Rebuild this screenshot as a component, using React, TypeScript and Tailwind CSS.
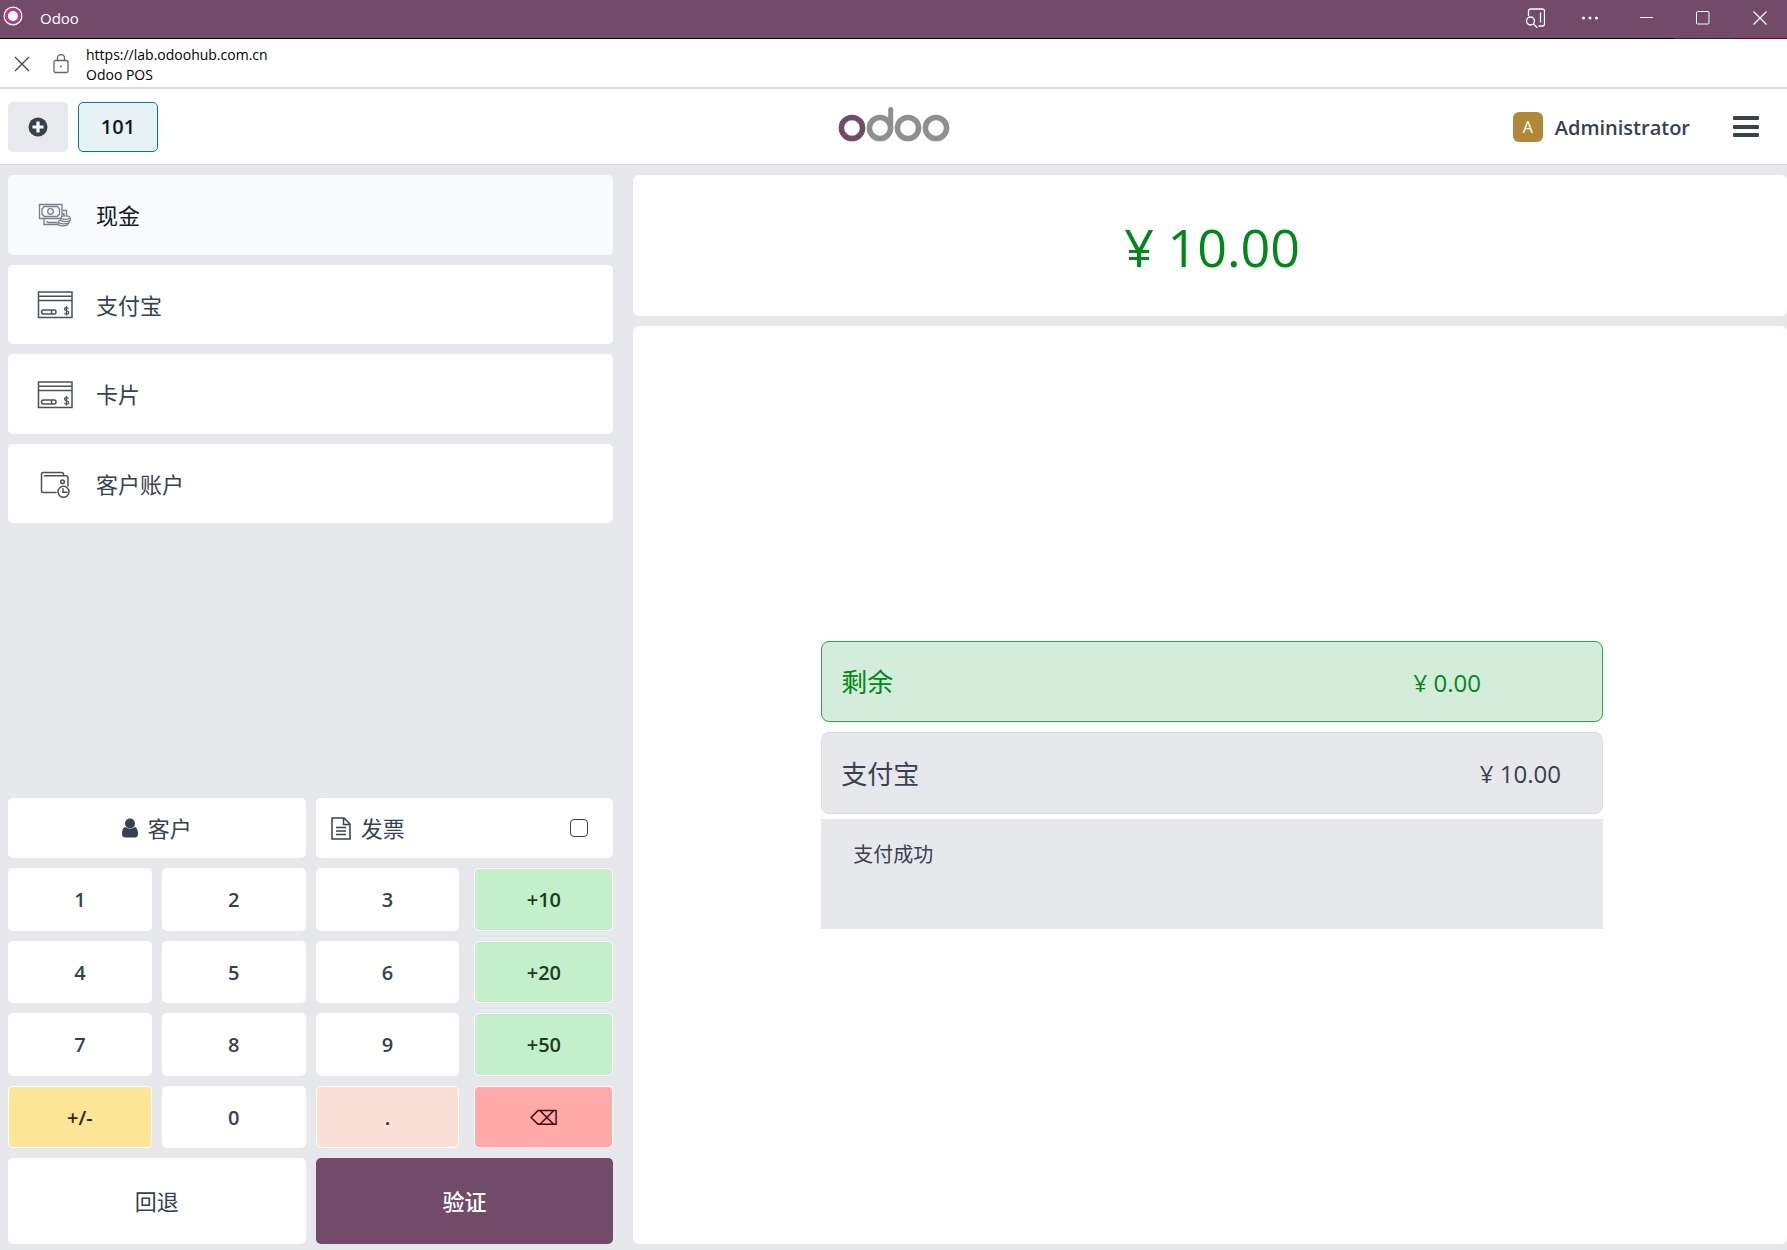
import { ReactNode, useState } from "react";
import clsx from "clsx";

const LINE = "#4b505e";

function CashIcon() {
  return (
    <svg width="36" height="28" viewBox="0 0 36 28" fill="none" stroke="#7b7f89" strokeWidth="1.3">
      <path d="M2.500 2.500h22.500v14h-22.500z" />
      <path d="M7 4.500h13.500a2.500 2.500 0 0 0 2 2v6a2.500 2.500 0 0 0-2 2h-13.500a2.500 2.500 0 0 0-2-2v-6a2.500 2.500 0 0 0 2-2z" />
      <circle cx="13.500" cy="9.500" r="2.800" />
      <path d="M7 17v5.500h14M9.500 19a2.500 2.500 0 0 0 2 1.500h9M25.500 8.500h4v5M25 12h2v2" />
      <g fill="#f9fafc">
        <ellipse cx="26" cy="21.800" rx="5" ry="2" />
        <ellipse cx="27" cy="19.800" rx="5.500" ry="2" />
        <ellipse cx="28.500" cy="17.600" rx="5" ry="2" />
        <ellipse cx="28.500" cy="15.600" rx="4.500" ry="1.800" />
      </g>
    </svg>
  );
}

function CardIcon() {
  return (
    <svg width="36" height="28" viewBox="0 0 36 28" fill="none" stroke={LINE} strokeWidth="1.5">
      <path d="M1.500 1h33.500v25.500H1.500z" />
      <path d="M1.500 5.300h33.500M1.500 9.500h33.500" />
      <rect x="4.500" y="19" width="14.500" height="4" rx="2" />
      <path d="M14.500 19v4" />
      <path d="M31.500 17.700c-.6-1.600-4-1.600-4 .3 0 2.300 4.200 1.300 4.200 3.700 0 2-3.700 2-4.200.2M29.500 15v9.500" strokeWidth="1.300" />
    </svg>
  );
}

function WalletIcon() {
  return (
    <svg width="36" height="28" viewBox="0 0 36 28" fill="none" stroke={LINE} strokeWidth="1.500" strokeLinecap="round">
      <path d="M19 22.500H6a1.500 1.500 0 0 1-1.500-1.500V4a1.500 1.500 0 0 1 1.500-1.500h19a1.500 1.500 0 0 1 1.500 1.500v1.500" />
      <path d="M7.500 5.700h21.500a2 2 0 0 1 2 2V16" />
      <circle cx="25.500" cy="11.700" r="1.800" />
      <circle cx="26.500" cy="21.800" r="5.500" />
      <path d="M26 18.800v3.500h4" />
    </svg>
  );
}

const methods = [
  { id: "cash", name: "现金", icon: <CashIcon /> },
  { id: "alipay", name: "支付宝", icon: <CardIcon /> },
  { id: "card", name: "卡片", icon: <CardIcon /> },
  { id: "account", name: "客户账户", icon: <WalletIcon /> },
];

const PLAIN = "bg-white font-semibold text-[#374151]";
const GREEN = "ml-[5px] border border-white bg-[#c3f0ca] font-semibold text-[#1d3a22]";

const keys = [
  { label: "1", style: PLAIN },
  { label: "2", style: PLAIN },
  { label: "3", style: PLAIN },
  { label: "+10", style: GREEN },
  { label: "4", style: PLAIN },
  { label: "5", style: PLAIN },
  { label: "6", style: PLAIN },
  { label: "+20", style: GREEN },
  { label: "7", style: PLAIN },
  { label: "8", style: PLAIN },
  { label: "9", style: PLAIN },
  { label: "+50", style: GREEN },
  { label: "+/-", style: "border border-white bg-[#fde598] font-semibold text-[#2b2710]" },
  { label: "0", style: PLAIN },
  { label: ".", style: "border border-white bg-[#fae0d6] font-semibold text-[#40261b]" },
  { label: "⌫", style: "ml-[5px] border border-white bg-[#ffa9a9] text-[#450a0a]" },
];

function WindowButton({ label, children }: { label: string; children: ReactNode }) {
  return (
    <button type="button" aria-label={label} className="flex h-full w-14 items-center justify-center">
      <svg width="20" height="20" viewBox="0 0 20 20" fill="none" stroke="#fff" strokeWidth="1">
        {children}
      </svg>
    </button>
  );
}

function TitleBar() {
  return (
    <header className="bg-[#714b67] text-white">
      <div className="flex h-[38px] items-center">
        <svg width="20" height="20" viewBox="0 0 20 20" className="mr-[17px] mb-[6px] ml-[3px]">
          <circle cx="10" cy="10" r="9.500" fill="#fff" />
          <circle cx="10" cy="10" r="8.300" fill="#a24689" />
          <circle cx="10" cy="10" r="5" fill="#fff" />
        </svg>
        <span className="flex-1 pb-[2px] text-[15px]">Odoo</span>
        <div className="flex h-full items-center pb-[2px]">
          <WindowButton label="Search tabs">
            <path
              d="M3.500 8V3a2 2 0 0 1 2-2h12a2 2 0 0 1 2 2v13a2 2 0 0 1-2 2h-4M15.500 4.500v10"
              strokeWidth="1.300"
            />
            <circle cx="5.500" cy="13" r="4" strokeWidth="1.300" />
            <path d="m8.500 16 4 4" strokeWidth="1.300" />
          </WindowButton>
          <WindowButton label="More">
            <g fill="#fff" stroke="none">
              <circle cx="2.500" cy="10" r="1.500" />
              <circle cx="9" cy="10" r="1.500" />
              <circle cx="15.500" cy="10" r="1.500" />
            </g>
          </WindowButton>
          <WindowButton label="Minimize">
            <path d="M3 9.500h13" />
          </WindowButton>
          <WindowButton label="Maximize">
            <rect x="3.500" y="3.500" width="12.500" height="12.500" rx="1" />
          </WindowButton>
          <WindowButton label="Close window">
            <path d="m4.500 3.500 13 13M17.500 3.500l-13 13" strokeWidth="1.200" />
          </WindowButton>
        </div>
      </div>
      <div className="flex h-px bg-black">
        <div className="ml-auto w-[58px] bg-[#33202e]" />
        <div className="w-[55px] bg-[#70001a]" />
      </div>
    </header>
  );
}

function AddressBar() {
  return (
    <div className="flex h-[50px] items-center border-b-2 border-[#dcdcdc] bg-white pt-[2px] text-black">
      <button type="button" aria-label="Close" className="ml-[14px]">
        <svg width="16" height="16" viewBox="0 0 16 16" fill="none" stroke="#444" strokeWidth="1.300">
          <path d="m1 1 14 14M15 1 1 15" />
        </svg>
      </button>
      <svg width="16" height="20" viewBox="0 0 16 20" fill="none" stroke="#666" strokeWidth="1.300" className="ml-[23px]">
        <rect x="1" y="6.500" width="14" height="12" rx="1.500" />
        <path d="M4.500 6.500V4a3.500 3.500 0 0 1 7 0v2.500" />
        <circle cx="8" cy="12.500" r="1" fill="#666" stroke="none" />
      </svg>
      <div className="ml-[17px] pt-[2px] text-sm leading-5">
        <a href="#" className="block">
          https://lab.odoohub.com.cn
        </a>
        <div>Odoo POS</div>
      </div>
    </div>
  );
}

function OdooLogo() {
  return (
    <svg width="112" height="40" viewBox="0 0 112 40" fill="none" stroke="#8f8f8f" strokeWidth="5.500" role="img" aria-label="odoo">
      <circle cx="14" cy="21" r="10.600" stroke="#714b67" />
      <circle cx="42" cy="21" r="10.600" />
      <circle cx="70" cy="21" r="10.600" />
      <circle cx="98" cy="21" r="10.600" />
      <path d="M52.700 2.500V21" strokeLinecap="round" strokeWidth="5" />
    </svg>
  );
}

function Navbar() {
  return (
    <nav className="grid h-[76px] grid-cols-[1fr_auto_1fr] items-center border-b border-[#d8dadd] bg-white">
      <div className="flex gap-[10px] pl-2">
        <button type="button" aria-label="New order" className="flex h-[50px] w-[60px] items-center justify-center rounded-[5px] bg-[#e7e9ed]">
          <svg width="20" height="20" viewBox="0 0 20 20">
            <circle cx="10" cy="10" r="9.500" fill="#374151" />
            <path d="M10 4.500v11M4.500 10h11" stroke="#fff" strokeWidth="3.200" />
          </svg>
        </button>
        <button type="button" className="h-[50px] w-20 rounded-[5px] border border-[#017e84] bg-[#e6f2f3] text-xl font-semibold text-[#111827]">
          101
        </button>
      </div>
      <OdooLogo />
      <div className="flex items-center justify-end pr-[28px]">
        <span className="flex h-[30px] w-[30px] items-center justify-center rounded-[6px] bg-[#b08938] text-base font-medium text-white">
          A
        </span>
        <span className="ml-3 pt-[2px] text-xl font-semibold text-[#374151]">Administrator</span>
        <button type="button" aria-label="Menu" className="ml-[43px]">
          <svg width="26" height="22" viewBox="0 0 26 22" fill="#374151">
            <rect y="0" width="26" height="4" rx="1" />
            <rect y="9" width="26" height="4" rx="1" />
            <rect y="17" width="26" height="4" rx="1" />
          </svg>
        </button>
      </div>
    </nav>
  );
}

export default function App() {
  const [invoice, setInvoice] = useState(false);

  return (
    <div className="flex min-h-screen flex-col bg-[#e7e8ec] font-['Open_Sans','Noto_Sans_CJK_SC',sans-serif] text-[#374151]">
      <TitleBar />
      <AddressBar />
      <Navbar />
      <main className="flex flex-1 pt-[10px] pb-[6px]">
        <section className="flex w-[34.32%] min-w-[400px] shrink-0 flex-col pl-2">
          <div className="grid h-[348px] grid-rows-4 gap-[10px]">
            {methods.map((m) => (
              <button
                key={m.id}
                type="button"
                className={clsx(
                  "flex items-center rounded-[5px] pt-[2px] pl-[29px] text-[22px]",
                  m.id === "cash" ? "bg-[#f9fafc] text-[#111827]" : "bg-white"
                )}
              >
                {m.icon}
                <span className="ml-[23px]">{m.name}</span>
              </button>
            ))}
          </div>

          <div className="mt-auto grid grid-cols-2 gap-[10px] text-[22px]">
            <button type="button" className="flex h-[60px] items-center justify-center gap-[10px] rounded-[5px] bg-white">
              <svg width="16" height="20" viewBox="0 0 16 20" fill="#374151">
                <circle cx="8" cy="5.500" r="5" />
                <path d="M3.300 9C1 9.500 0 12 0 16c0 2.200 1.300 3.500 3 3.500h10c1.700 0 3-1.300 3-3.500 0-4-1-6.500-3.300-7a7 7 0 0 1-9.400 0z" />
              </svg>
              客户
            </button>
            <label className="flex h-[60px] items-center gap-[10px] rounded-[5px] bg-white pr-[25px] pl-[15px]">
              <svg width="20" height="23" viewBox="0 0 20 23" fill="none" stroke="#374151" strokeWidth="1.500">
                <path d="M1 1h12l6 6v15H1zM12.500 1v6.500H19" />
                <path d="M5 10.500h10M5 14h10M5 17.500h10" />
              </svg>
              <span className="flex-1">发票</span>
              <input
                type="checkbox"
                checked={invoice}
                onChange={(e) => setInvoice(e.target.checked)}
                className="h-[18px] w-[18px] appearance-none rounded border border-[#374151] checked:bg-[#714b67]"
              />
            </label>
          </div>

          <div className="mt-[10px] grid h-[280px] grid-cols-4 grid-rows-4 gap-[10px]">
            {keys.map((k) => (
              <button key={k.label} type="button" className={clsx("rounded-[5px] pt-[2px] text-xl", k.style)}>
                {k.label}
              </button>
            ))}
          </div>

          <div className="mt-[10px] grid grid-cols-2 gap-[10px] text-[22px]">
            <button type="button" className="h-[86px] rounded-[5px] bg-white">
              回退
            </button>
            <button type="button" className="h-[86px] rounded-[5px] bg-[#714b67] font-medium text-white">
              验证
            </button>
          </div>
        </section>

        <section className="ml-5 flex flex-1 flex-col gap-[10px]">
          <div className="flex h-[141px] items-center justify-center rounded-md bg-white pt-[2px] pl-1 text-[52px] text-[#008818]">
            ¥ 10.00
          </div>
          <div className="flex flex-1 flex-col justify-center rounded-md bg-white pr-[184px] pl-[188px]">
            <div className="flex h-[81px] items-center justify-between rounded-lg border border-[#28a745] bg-[#d4edda] pt-[2px] pr-[121px] pl-[19px] text-[#008818]">
              <span className="text-[26px]">剩余</span>
              <span className="text-2xl">¥ 0.00</span>
            </div>
            <div className="mt-[10px] flex h-[82px] items-center justify-between rounded-lg border border-[#d8dadd] bg-[#e7e8ec] pt-[2px] pr-[41px] pl-[19px]">
              <span className="text-[26px]">支付宝</span>
              <span className="text-2xl">¥ 10.00</span>
            </div>
            <div className="mt-[5px] h-[110px] bg-[#e7e8ec] px-8 pt-[22px] text-xl">支付成功</div>
          </div>
        </section>
      </main>
    </div>
  );
}
